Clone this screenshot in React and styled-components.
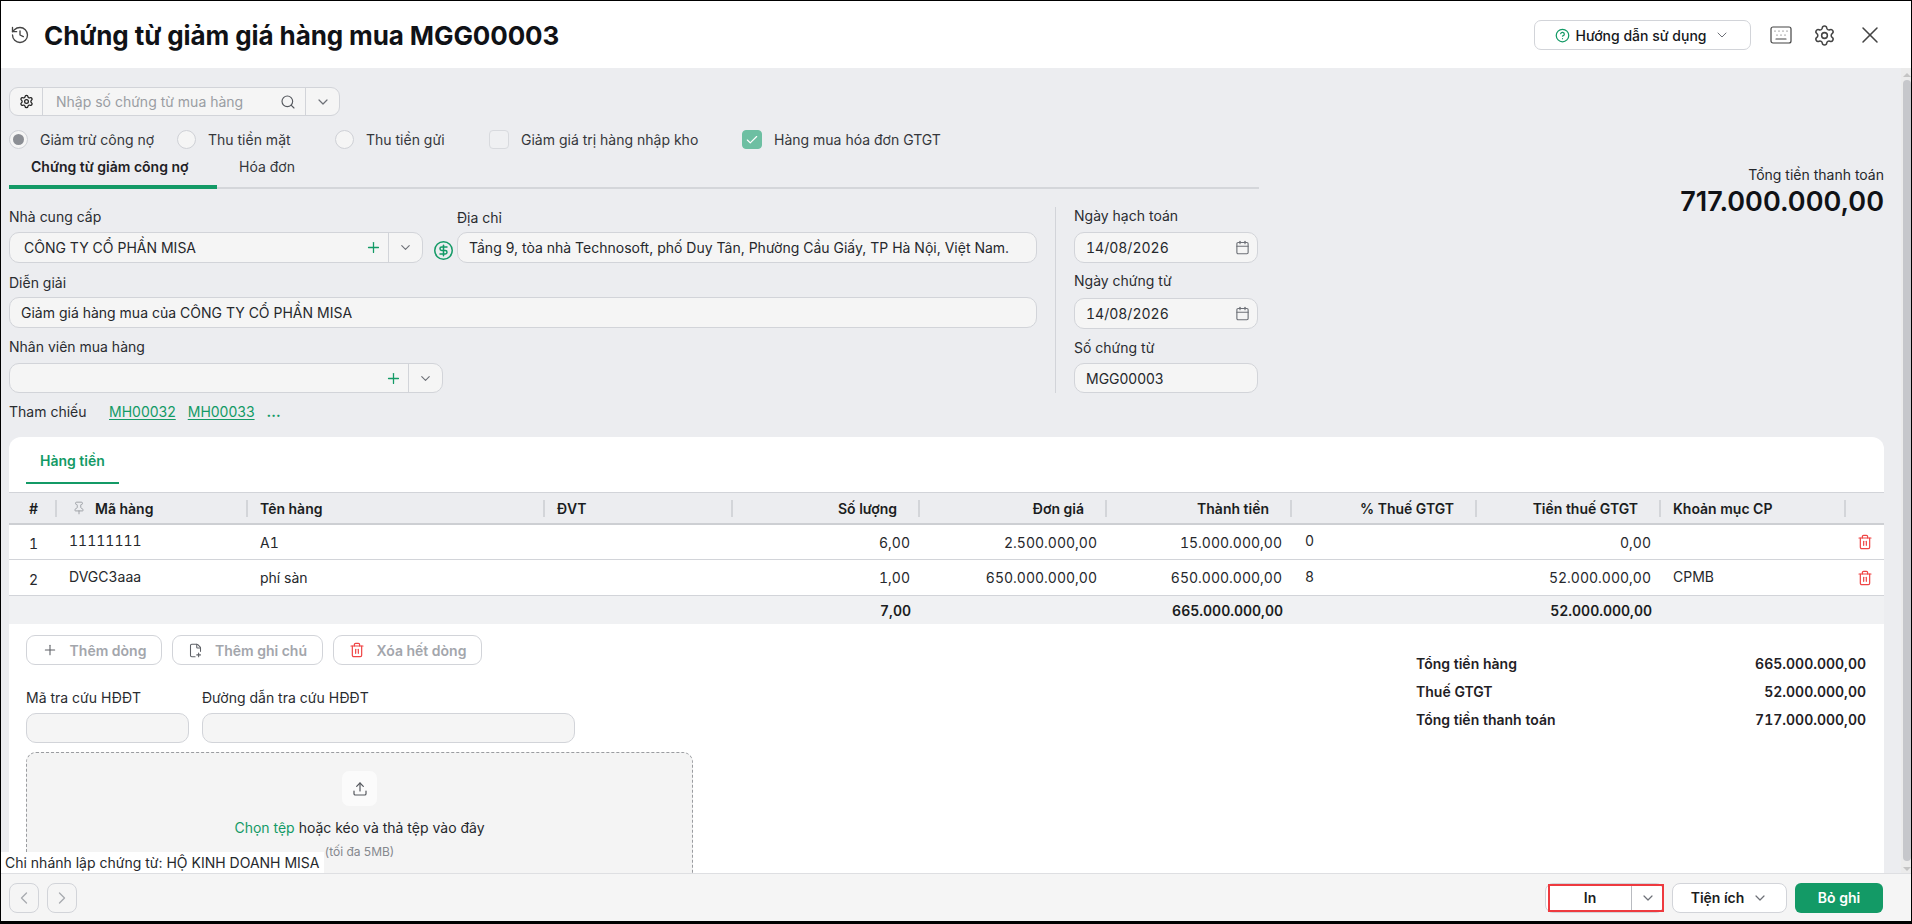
import React from 'react';
import styled, { createGlobalStyle } from 'styled-components';
import {
  History, Settings, Search, ChevronDown, ChevronLeft, ChevronRight, Plus, CircleDollarSign, Calendar,
  CircleHelp, Keyboard, X, Pin, Trash2, FilePlus2, Upload, Check,
} from 'lucide-react';

const GREEN = '#139A66';
const LINE = '#D2D4D9';
const COLS = '48px 191px 297px 188px 187px 187px 185px 185px 184px 185px 37px';

const Global = createGlobalStyle`
  html, body { margin: 0; padding: 0; overflow: hidden; background: #000; }
  * { box-sizing: border-box; }
  body { font-family: Inter, "Noto Sans", sans-serif; font-size: 14px; color: #1B1D21; }
`;

const Win = styled.div`
  width: 1912px; height: 924px; background: #fff; display: flex; flex-direction: column;
  border-style: solid; border-color: #000; border-width: 1px 1px 3px 1px;
`;
const Header = styled.header`
  height: 67px; flex: none; display: flex; align-items: center; padding: 2px 27px 0 9px; background: #fff;
`;
const BackIcon = styled(History)` color: #444; margin-right: 14px; margin-top: -2px; `;
const Title = styled.h1` margin: 0; font-size: 26px; line-height: 34px; font-weight: 700; color: #101216; flex: 1; letter-spacing: -0.1px; `;
const HelpButton = styled.button`
  width: 217px; height: 30px; margin-top: -1px; border: 1px solid ${LINE}; border-radius: 7px; background: #fff;
  display: flex; align-items: center; justify-content: center; gap: 5px; font: 500 14px Inter, sans-serif; color: #16181C; padding: 0;
`;
const HeadIcons = styled.div` display: flex; align-items: center; margin-left: 18px; gap: 20px; color: #444; margin-top: -1px; `;

const Body = styled.div` flex: 1; min-height: 0; display: flex; position: relative; overflow: hidden; background: #ECEDF0; `;
const Content = styled.main` flex: 1; min-width: 0; padding: 19px 0 0 8px; `;
const Scrollbar = styled.div` width: 10px; flex: none; background: #EBEBEB; position: relative; `;
const ArrowUp = styled.div`
  position: absolute; top: 5px; left: 2px; width: 0; height: 0;
  border-left: 4px solid transparent; border-right: 4px solid transparent; border-bottom: 4px solid #C4C4C4;
`;
const ArrowDown = styled(ArrowUp)` top: auto; bottom: 2px; border-bottom: 0; border-top: 4px solid #C4C4C4; `;
const Thumb = styled.div` position: absolute; top: 12px; left: 2px; right: 0; bottom: 12px; border-radius: 4px; background: #C6C7CB; `;

const Top = styled.section` display: flex; height: 350px; `;
const TopLeft = styled.div` width: 1250px; flex: none; `;
const TopRight = styled.div` flex: 1; text-align: right; padding: 78px 17px 0 0; margin-right: 0; `;
const TotalLabel = styled.div` font-size: 14px; line-height: 20px; color: #26282C; `;
const TotalValue = styled.div` font-size: 27px; line-height: 34px; font-weight: 600; color: #101216; margin-top: 0; `;

const SearchBox = styled.div`
  width: 331px; height: 29px; display: flex; align-items: center; background: #F5F5F5; border: 1px solid ${LINE}; border-radius: 9px;
`;
const SearchGear = styled.div` width: 33px; height: 100%; display: flex; align-items: center; justify-content: center; border-right: 1px solid ${LINE}; color: #222; `;
const SearchText = styled.div` flex: 1; padding-left: 13px; color: #9A9DA3; font-size: 14px; `;
const SearchChevron = styled.div` width: 34px; height: 100%; margin-left: 9px; display: flex; align-items: center; justify-content: center; border-left: 1px solid ${LINE}; color: #6D7077; `;

const Options = styled.div` display: flex; height: 19px; margin-top: 14px; `;
const Option = styled.label` width: ${p => p.$w}px; flex: none; display: flex; align-items: center; gap: 12px; color: #35373B; font-size: 14px; white-space: nowrap; `;
const Radio = styled.span`
  width: 19px; height: 19px; border-radius: 50%; border: 1px solid #CFD1D6; background: #F5F5F5; flex: none; display: flex; align-items: center; justify-content: center;
  &::after { content: ''; width: 11px; height: 11px; border-radius: 50%; background: ${p => (p.$on ? '#8B8E94' : 'transparent')}; }
`;
const Box = styled.span`
  width: 20px; height: 19px; border-radius: 4px; flex: none; display: flex; align-items: center; justify-content: center; color: #fff;
  border: 1px solid ${p => (p.$on ? '#6DBFA2' : '#D8DADE')}; background: ${p => (p.$on ? '#6DBFA2' : '#EFF0F2')};
`;

const Tabs = styled.div` height: 40px; display: flex; border-bottom: 2px solid #D4D6DA; `;
const Tab = styled.div`
  width: ${p => p.$w}px; height: 40px; flex: none; padding-left: ${p => p.$pad}px; line-height: 36px; white-space: nowrap; font-size: 14px;
  font-weight: ${p => (p.$on ? 600 : 400)}; color: ${p => (p.$on ? '#1F2125' : '#35373B')};
  border-bottom: 4px solid ${p => (p.$on ? GREEN : 'transparent')};
`;

const Form = styled.div` display: flex; margin-top: 18px; `;
const FormLeft = styled.div` width: 1028px; flex: none; `;
const Row = styled.div` display: flex; `;
const Field = styled.div` width: ${p => (p.$w ? `${p.$w}px` : 'auto')}; flex: ${p => (p.$w ? 'none' : '1')}; min-width: 0; padding-top: ${p => p.$top || 0}px; `;
const Label = styled.div` font-size: 14px; line-height: ${p => p.$lh || 20}px; color: #2A2C30; margin-top: ${p => p.$mt || 0}px; margin-bottom: ${p => p.$mb || 0}px; white-space: nowrap; `;
const Input = styled.div`
  height: ${p => p.$h || 31}px; border: 1px solid ${LINE}; border-radius: 10px; background: #F5F5F5; display: flex; align-items: center;
  padding-left: ${p => p.$pad ?? 11}px; font-size: 14px; color: #26282C; white-space: nowrap; overflow: hidden;
  font-variant-numeric: ${p => (p.$num ? 'tabular-nums' : 'normal')};
`;
const InputText = styled.span` flex: 1; min-width: 0; `;
const AddIcon = styled(Plus)` color: ${GREEN}; flex: none; margin-right: 6px; `;
const DropPart = styled.span` width: 34px; height: 100%; flex: none; border-left: 1px solid ${LINE}; display: flex; align-items: center; justify-content: center; color: #6D7077; `;
const Money = styled(CircleDollarSign)` flex: none; align-self: flex-end; color: ${GREEN}; margin: 0 3px 2px 10px; `;
const CalIcon = styled(Calendar)` flex: none; color: #6D7077; margin-right: 7px; `;

const RefRow = styled.div` display: flex; align-items: center; height: 20px; margin-top: 8px; font-size: 14px; color: #2A2C30; `;
const RefLabel = styled.span` width: 100px; flex: none; `;
const RefLink = styled.a` color: ${GREEN}; text-decoration: underline; text-underline-offset: 2px; margin-right: 12px; `;
const RefMore = styled.span` color: ${GREEN}; font-weight: 700; `;

const VLine = styled.div` width: 1px; height: 186px; flex: none; background: ${LINE}; margin: 0 18px 0 18px; `;
const Dates = styled.div` width: 184px; flex: none; `;

const Panel = styled.section` margin-top: 0; margin-right: 17px; min-height: 460px; background: #fff; border-radius: 12px 12px 0 0; `;
const PanelTab = styled.div`
  width: 93px; margin: 0 0 8px 17px; padding: 14px 0 11px 14px; line-height: 20px; border-bottom: 2px solid ${GREEN}; color: ${GREEN}; font-weight: 600; font-size: 14px; white-space: nowrap;
`;
const HeadRow = styled.div`
  display: grid; grid-template-columns: ${COLS}; height: 33px; align-items: center; background: #ECEDF0; border-top: 1px solid ${LINE}; border-bottom: 2px solid #CDCFD3; font-weight: 600; font-size: 14px; color: #1B1D21;
`;
const HeadCell = styled.div`
  height: 17px; display: flex; align-items: center; gap: 9px; white-space: nowrap; position: relative;
  justify-content: ${p => (p.$right ? 'flex-end' : 'flex-start')};
  padding: ${p => (p.$right ? '0 21px 0 0' : `0 0 0 ${p.$pad ?? 12}px`)};
  border-right: ${p => (p.$last ? '0' : '2px solid #D3D5D9')};
`;
const PinIcon = styled(Pin)` color: #9A9DA3; flex: none; `;
const DataRow = styled.div`
  display: grid; grid-template-columns: ${COLS}; height: ${p => p.$h}px; align-items: center; border-bottom: 1px solid ${LINE}; font-size: 14px; color: #26282C; font-variant-numeric: tabular-nums;
`;
const Cell = styled.div`
  text-align: ${p => (p.$right ? 'right' : 'left')};
  padding: ${p => p.$lift ? '0 0 3px' : (p.$drop ? '3px 0 0' : '0')};
  padding-left: ${p => (p.$right ? 0 : (p.$pad ?? 12))}px;
  padding-right: ${p => (p.$right ? 10 : 0)}px;
  white-space: nowrap;
`;
const TrashCell = styled.div` display: flex; justify-content: center; color: #EF4444; `;
const FootRow = styled.div`
  display: grid; grid-template-columns: ${COLS}; height: 28px; align-items: center; background: #F0F1F3; font-size: 14px; font-weight: 600; color: #1B1D21; font-variant-numeric: tabular-nums;
`;
const FootCell = styled.div` text-align: right; padding-right: 9px; white-space: nowrap; `;

const Lower = styled.div` display: flex; justify-content: space-between; `;
const LowerLeft = styled.div` width: 700px; padding: 11px 0 0 17px; `;
const Actions = styled.div` display: flex; gap: 10px; `;
const ActionButton = styled.button`
  width: ${p => p.$w}px; height: 30px; border: 1px solid ${LINE}; border-radius: 9px; background: #fff; padding: 0;
  display: flex; align-items: center; justify-content: center; gap: 12px; font: 600 14px Inter, sans-serif; color: #A3A6AC;
`;
const GreyIcon = styled.span` display: flex; color: ${p => p.$c || '#5E6167'}; `;
const Lookups = styled.div` display: flex; gap: 13px; margin-top: 24px; `;
const LookupField = styled.div` width: ${p => p.$w}px; flex: none; `;
const DropZone = styled.div`
  width: 667px; height: 200px; margin-top: 9px; border: 1px dashed #9A9CA0; border-radius: 10px; background: #F4F4F4; padding-top: 18px;
  display: flex; flex-direction: column; align-items: center;
`;
const UploadBox = styled.div` width: 35px; height: 35px; border-radius: 7px; background: #FBFBFB; display: flex; align-items: center; justify-content: center; color: #55585E; `;
const DropText = styled.div` margin-top: 12px; line-height: 20px; font-size: 14px; color: #26282C; `;
const DropLink = styled.span` color: ${GREEN}; `;
const DropSub = styled.div` margin-top: 6px; line-height: 16px; font-size: 12px; color: #85888E; `;

const Summary = styled.div` width: 450px; margin-right: 18px; padding-top: 25px; flex: none; `;
const SummaryRow = styled.div` display: flex; justify-content: space-between; height: 28px; align-items: center; font-size: 14px; font-weight: 600; color: #1F2125; font-variant-numeric: tabular-nums; `;

const Branch = styled.div` position: absolute; left: 0; bottom: 0; height: 21px; padding: 0 4px; background: #fff; line-height: 21px; font-size: 14px; color: #26282C; white-space: nowrap; `;

const Footer = styled.footer`
  height: 48px; flex: none; background: #F5F5F5; border-top: 1px solid #DEDFE2; display: flex; align-items: center; padding: 0 28px 0 8px; gap: 8px; position: relative;
`;
const NavButton = styled.button` width: 30px; height: 30px; padding: 0; border: 1px solid ${LINE}; border-radius: 8px; background: #F5F5F5; display: flex; align-items: center; justify-content: center; color: #A8ABB0; `;
const Spacer = styled.div` flex: 1; `;
const Split = styled.div` width: 119px; height: 30px; position: relative; display: flex; background: #fff; border: 1px solid ${LINE}; border-radius: 8px; `;
const SplitMain = styled.div` flex: 1; display: flex; align-items: center; justify-content: center; font-weight: 600; font-size: 14px; padding-left: 3px; `;
const SplitDrop = styled.div` width: 32px; border-left: 1px solid #B9BBC0; display: flex; align-items: center; justify-content: center; color: #6D7077; `;
const Highlight = styled.div` position: absolute; left: 2px; right: -1px; top: 0; bottom: 0; border: 2px solid #EE3A3F; `;
const MenuButton = styled.button` width: 115px; height: 30px; padding: 0; background: #fff; border: 1px solid ${LINE}; border-radius: 8px; display: flex; align-items: center; justify-content: center; gap: 8px; font: 600 14px Inter, sans-serif; color: #1B1D21; `;
const SaveButton = styled.button` width: 88px; height: 30px; padding: 0; background: ${GREEN}; border: 0; border-radius: 6px; color: #fff; font: 600 14px Inter, sans-serif; `;

const headers = [
  { t: '#', pad: 20 }, { t: 'Mã hàng', pad: 15, pin: true }, { t: 'Tên hàng' }, { t: 'ĐVT' }, { t: 'Số lượng', r: 1 }, { t: 'Đơn giá', r: 1 },
  { t: 'Thành tiền', r: 1 }, { t: '% Thuế GTGT', r: 1 }, { t: 'Tiền thuế GTGT', r: 1 }, { t: 'Khoản mục CP' },
];
const rows = [
  { h: 35, n: '1', code: '11111111', name: 'A1', qty: '6,00', price: '2.500.000,00', amt: '15.000.000,00', pct: '0', tax: '0,00', cp: '' },
  { h: 36, n: '2', code: 'DVGC3aaa', name: 'phí sàn', qty: '1,00', price: '650.000.000,00', amt: '650.000.000,00', pct: '8', tax: '52.000.000,00', cp: 'CPMB' },
];

export default function App() {
  return (
    <Win>
      <Global />
      <Header>
        <BackIcon size={20} strokeWidth={1.6} />
        <Title>Chứng từ giảm giá hàng mua MGG00003</Title>
        <HelpButton>
          <CircleHelp size={15} color={GREEN} strokeWidth={2} />
          Hướng dẫn sử dụng
          <ChevronDown size={16} color="#6D7077" strokeWidth={1.5} style={{ marginLeft: 2 }} />
        </HelpButton>
        <HeadIcons>
          <Keyboard size={24} strokeWidth={1.2} />
          <Settings size={23} strokeWidth={1.6} />
          <X size={28} strokeWidth={1.3} />
        </HeadIcons>
      </Header>
      <Body>
        <Content>
          <Top>
            <TopLeft>
              <SearchBox>
                <SearchGear><Settings size={15} strokeWidth={2} /></SearchGear>
                <SearchText>Nhập số chứng từ mua hàng</SearchText>
                <Search size={16} color="#55585E" strokeWidth={1.7} />
                <SearchChevron><ChevronDown size={16} strokeWidth={1.8} /></SearchChevron>
              </SearchBox>
              <Options>
                <Option $w={168}><Radio $on />Giảm trừ công nợ</Option>
                <Option $w={158}><Radio />Thu tiền mặt</Option>
                <Option $w={154}><Radio />Thu tiền gửi</Option>
                <Option $w={253}><Box />Giảm giá trị hàng nhập kho</Option>
                <Option $w={260}><Box $on><Check size={14} strokeWidth={2} /></Box>Hàng mua hóa đơn GTGT</Option>
              </Options>
              <Tabs>
                <Tab $w={208} $pad={22} $on>Chứng từ giảm công nợ</Tab>
                <Tab $w={100} $pad={22}>Hóa đơn</Tab>
              </Tabs>
              <Form>
                <FormLeft>
                  <Row>
                    <Field $w={414}>
                      <Label $mb={5}>Nhà cung cấp</Label>
                      <Input $pad={14}>
                        <InputText>CÔNG TY CỔ PHẦN MISA</InputText>
                        <AddIcon size={17} strokeWidth={1.8} />
                        <DropPart><ChevronDown size={15} strokeWidth={1.8} /></DropPart>
                      </Input>
                    </Field>
                    <Money size={21} strokeWidth={1.7} />
                    <Field $top={1}>
                      <Label $mb={4}>Địa chỉ</Label>
                      <Input>Tầng 9, tòa nhà Technosoft, phố Duy Tân, Phường Cầu Giấy, TP Hà Nội, Việt Nam.</Input>
                    </Field>
                  </Row>
                  <Label $mt={10} $mb={4}>Diễn giải</Label>
                  <Input>Giảm giá hàng mua của CÔNG TY CỔ PHẦN MISA</Input>
                  <Label $mt={9} $mb={6}>Nhân viên mua hàng</Label>
                  <Field $w={434}>
                    <Input $h={30}>
                      <InputText />
                      <AddIcon size={17} strokeWidth={1.8} />
                      <DropPart><ChevronDown size={15} strokeWidth={1.8} /></DropPart>
                    </Input>
                  </Field>
                  <RefRow>
                    <RefLabel>Tham chiếu</RefLabel>
                    <RefLink>MH00032</RefLink>
                    <RefLink>MH00033</RefLink>
                    <RefMore>...</RefMore>
                  </RefRow>
                </FormLeft>
                <VLine />
                <Dates>
                  <Label $lh={18} $mb={7}>Ngày hạch toán</Label>
                  <Input $num>
                    <InputText>14/08/2026</InputText>
                    <CalIcon size={15} strokeWidth={1.8} />
                  </Input>
                  <Label $lh={18} $mt={9} $mb={8}>Ngày chứng từ</Label>
                  <Input $num>
                    <InputText>14/08/2026</InputText>
                    <CalIcon size={15} strokeWidth={1.8} />
                  </Input>
                  <Label $lh={18} $mt={10} $mb={6}>Số chứng từ</Label>
                  <Input $h={30}>MGG00003</Input>
                </Dates>
              </Form>
            </TopLeft>
            <TopRight>
              <TotalLabel>Tổng tiền thanh toán</TotalLabel>
              <TotalValue>717.000.000,00</TotalValue>
            </TopRight>
          </Top>
          <Panel>
            <PanelTab>Hàng tiền</PanelTab>
            <HeadRow>
              {headers.map(h => (
                <HeadCell key={h.t} $right={h.r} $pad={h.pad}>
                  {h.pin && <PinIcon size={14} strokeWidth={1.6} />}
                  {h.t}
                </HeadCell>
              ))}
              <HeadCell $last />
            </HeadRow>
            {rows.map(r => (
              <DataRow key={r.n} $h={r.h}>
                <Cell $pad={20} $drop>{r.n}</Cell>
                <Cell $lift>{r.code}</Cell>
                <Cell>{r.name}</Cell>
                <Cell />
                <Cell $right>{r.qty}</Cell>
                <Cell $right>{r.price}</Cell>
                <Cell $right>{r.amt}</Cell>
                <Cell $lift $pad={13}>{r.pct}</Cell>
                <Cell $right>{r.tax}</Cell>
                <Cell $lift>{r.cp}</Cell>
                <TrashCell><Trash2 size={16} strokeWidth={1.8} /></TrashCell>
              </DataRow>
            ))}
            <FootRow>
              <div /><div /><div /><div />
              <FootCell>7,00</FootCell>
              <div />
              <FootCell>665.000.000,00</FootCell>
              <div />
              <FootCell>52.000.000,00</FootCell>
              <div /><div />
            </FootRow>
            <Lower>
              <LowerLeft>
                <Actions>
                  <ActionButton $w={136}><GreyIcon><Plus size={16} strokeWidth={1.6} /></GreyIcon>Thêm dòng</ActionButton>
                  <ActionButton $w={151}><GreyIcon><FilePlus2 size={15} strokeWidth={1.7} /></GreyIcon>Thêm ghi chú</ActionButton>
                  <ActionButton $w={149}><GreyIcon $c="#EF4444"><Trash2 size={16} strokeWidth={1.8} /></GreyIcon>Xóa hết dòng</ActionButton>
                </Actions>
                <Lookups>
                  <LookupField $w={163}>
                    <Label $lh={18} $mb={6}>Mã tra cứu HĐĐT</Label>
                    <Input $h={30} />
                  </LookupField>
                  <LookupField $w={373}>
                    <Label $lh={18} $mb={6}>Đường dẫn tra cứu HĐĐT</Label>
                    <Input $h={30} />
                  </LookupField>
                </Lookups>
                <DropZone>
                  <UploadBox><Upload size={16} strokeWidth={1.8} /></UploadBox>
                  <DropText><DropLink>Chọn tệp</DropLink> hoặc kéo và thả tệp vào đây</DropText>
                  <DropSub>(tối đa 5MB)</DropSub>
                </DropZone>
              </LowerLeft>
              <Summary>
                <SummaryRow><span>Tổng tiền hàng</span><span>665.000.000,00</span></SummaryRow>
                <SummaryRow><span>Thuế GTGT</span><span>52.000.000,00</span></SummaryRow>
                <SummaryRow><span>Tổng tiền thanh toán</span><span>717.000.000,00</span></SummaryRow>
              </Summary>
            </Lower>
          </Panel>
        </Content>
        <Scrollbar>
          <ArrowUp />
          <Thumb />
          <ArrowDown />
        </Scrollbar>
        <Branch>Chi nhánh lập chứng từ: HỘ KINH DOANH MISA</Branch>
      </Body>
      <Footer>
        <NavButton><ChevronLeft size={20} strokeWidth={1.6} /></NavButton>
        <NavButton><ChevronRight size={20} strokeWidth={1.6} /></NavButton>
        <Spacer />
        <Split>
          <SplitMain>In</SplitMain>
          <SplitDrop><ChevronDown size={16} strokeWidth={1.8} /></SplitDrop>
          <Highlight />
        </Split>
        <MenuButton>Tiện ích<ChevronDown size={16} color="#6D7077" strokeWidth={1.8} /></MenuButton>
        <SaveButton>Bỏ ghi</SaveButton>
      </Footer>
    </Win>
  );
}
